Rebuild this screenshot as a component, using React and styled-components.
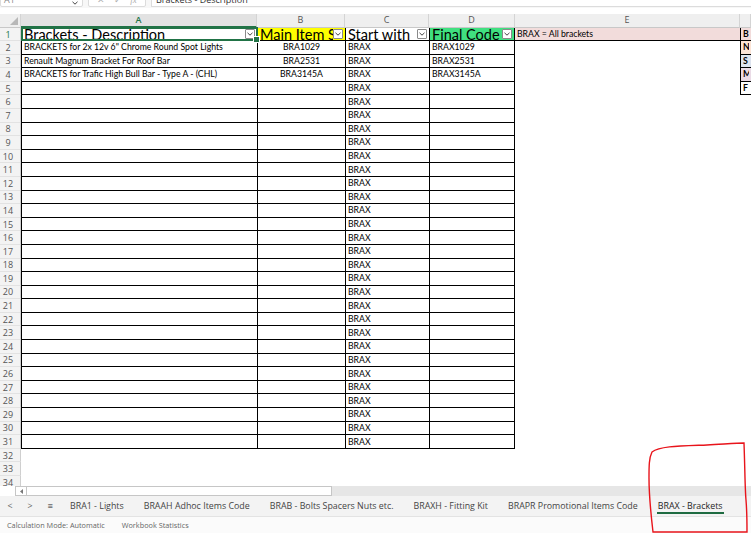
import React from 'react';
import styled, { createGlobalStyle } from 'styled-components';

const Global = createGlobalStyle`
  html, body { margin: 0; padding: 0; background: #fff; }
  body { font-family: "Open Sans", "Noto Sans", sans-serif; }
  * { box-sizing: border-box; }
`;

const Page = styled.div`
  position: relative;
  width: 751px;
  height: 533px;
  overflow: hidden;
  display: flex;
  flex-direction: column;
  background: #fff;
`;

/* ---------- formula bar ---------- */
const FormulaBar = styled.div`
  flex: none;
  height: 20px;
  margin-top: -12px;
  display: flex;
  gap: 5px;
  padding: 0 0 1px 0;
  background: #f7f7f7;
`;

const NameBox = styled.div`
  width: 83px;
  background: #fff;
  border: 1px solid #dcdcdc;
  border-radius: 2px;
  display: flex;
  align-items: flex-end;
  justify-content: space-between;
  padding: 0 4px 1px 3px;
  font-size: 9px;
  line-height: 10px;
  color: #8a8a8a;
`;

const FxBox = styled.div`
  width: 58px;
  background: #fff;
  border: 1px solid #dcdcdc;
  border-radius: 2px;
  display: flex;
  align-items: flex-end;
  justify-content: space-around;
  padding: 0 4px 1px;
  font-size: 9px;
  line-height: 10px;
  color: #b0b0b0;
`;

const FxLabel = styled.span`
  font-style: italic;
  font-family: "Liberation Serif", serif;
`;

const FormulaInput = styled.div`
  flex: 1;
  background: #fff;
  border: 1px solid #dcdcdc;
  border-right: none;
  display: flex;
  align-items: flex-end;
  padding: 0 4px 1px;
  font-size: 9px;
  line-height: 10px;
  color: #333;
`;

const Gap = styled.div`
  flex: none;
  height: 6px;
  background: #fff;
`;

/* ---------- sheet grid ---------- */
const Sheet = styled.div`
  flex: none;
  height: 472px;
  overflow: hidden;
  display: grid;
  grid-template-columns: 21px 236px 88px 84px 86px 225px 11px;
  grid-template-rows: 14px 13px repeat(33, 13.6px);
  font-family: Lato, "Liberation Sans", sans-serif;
`;

const Corner = styled.div`
  position: relative;
  background: #efefef;
  border-right: 1px solid #d4d4d4;
  border-bottom: 1px solid #c8c8c8;
  &::after {
    content: '';
    position: absolute;
    right: 2px;
    bottom: 2px;
    border-style: solid;
    border-width: 0 0 8px 8px;
    border-color: transparent transparent #b8b8b8 transparent;
  }
`;

const ColHead = styled.div`
  background: ${p => (p.$active ? '#e2e2e2' : '#efefef')};
  border-right: 1px solid #d4d4d4;
  border-bottom: ${p => (p.$active ? '2px solid #217346' : '1px solid #c8c8c8')};
  color: ${p => (p.$active ? '#217346' : '#555')};
  font-family: "Open Sans", "Noto Sans", sans-serif;
  font-weight: ${p => (p.$active ? 600 : 400)};
  font-size: 9px;
  line-height: 12px;
  text-align: center;
  overflow: hidden;
`;

const RowHead = styled.div`
  background: #f3f3f3;
  border-right: 1px solid #cfcfcf;
  border-bottom: 1px solid #e2e2e2;
  color: ${p => (p.$active ? '#217346' : '#555')};
  font-family: "Open Sans", "Noto Sans", sans-serif;
  font-size: 9px;
  display: flex;
  align-items: center;
  justify-content: center;
  overflow: hidden;
  padding-right: 4px;
`;

const Cell = styled.div`
  position: relative;
  min-width: 0;
  display: flex;
  align-items: ${p => (p.$big ? 'flex-start' : 'center')};
  justify-content: ${p => (p.$center ? 'center' : 'flex-start')};
  padding: 0 2px;
  background: ${p => p.$bg || '#fff'};
  border-left: ${p => (p.$left ? '1px solid #000' : 'none')};
  border-right: ${p => (p.$right ? '1px solid #000' : 'none')};
  border-bottom: ${p => (p.$bottom ? '1px solid #000' : 'none')};
  font-size: ${p => (p.$big ? '14.5px' : '8.7px')};
  font-weight: ${p => (p.$bold ? 700 : 400)};
  line-height: ${p => (p.$big ? '13px' : '12px')};
  color: #000;
  white-space: nowrap;
  overflow: ${p => (p.$big ? 'hidden' : 'visible')};
  ${p =>
    p.$active &&
    `
    overflow: visible;
    &::after {
      content: '';
      position: absolute;
      left: -1px; right: -1px; top: -1px; bottom: -1px;
      border: 2px solid #217346;
      pointer-events: none;
      z-index: 2;
    }
    &::before {
      content: '';
      position: absolute;
      right: -3px; bottom: -3px;
      width: 5px; height: 5px;
      background: #217346;
      border: 1px solid #fff;
      z-index: 3;
    }
  `}
`;

const Clip = styled.span`
  display: block;
  overflow: hidden;
  flex: 1;
  min-width: 0;
  height: 100%;
`;

const FilterBtn = styled.span`
  flex: none;
  width: 10px;
  height: 10px;
  margin-top: 1px;
  border: 1px solid #8a8a8a;
  background: #fff;
  display: flex;
  align-items: center;
  justify-content: center;
  border-radius: 1px;
`;

/* ---------- scrollbar / tabs / status ---------- */
const ScrollRow = styled.div`
  flex: none;
  height: 10px;
  display: flex;
  background: #fff;
`;

const ScrollTrack = styled.div`
  flex: 1;
  margin-left: 15px;
  background: #e6e6e6;
  display: flex;
  align-items: stretch;
`;

const ScrollBtn = styled.div`
  width: 12px;
  background: #fff;
  border: 1px solid #c6c6c6;
  display: flex;
  align-items: center;
  justify-content: center;
`;

const ScrollThumb = styled.div`
  width: 305px;
  background: #fff;
  border: 1px solid #c6c6c6;
  border-left: none;
`;

const TabBar = styled.div`
  flex: none;
  height: 21px;
  display: flex;
  align-items: stretch;
  background: #f3f3f3;
  border-bottom: 1px solid #e3e3e3;
  font-size: 8.85px;
  color: #444;
`;

const NavBtn = styled.div`
  width: ${p => p.$w}px;
  display: flex;
  align-items: center;
  justify-content: center;
  color: #666;
`;

const Tab = styled.div`
  position: relative;
  display: flex;
  align-items: center;
  padding: 0 10px;
  color: ${p => (p.$active ? '#1f1f1f' : '#444')};
  white-space: nowrap;
  &::after {
    content: '';
    position: absolute;
    left: 9px;
    right: 9px;
    bottom: 2px;
    height: 2px;
    background: ${p => (p.$active ? '#1e6b41' : 'transparent')};
  }
`;

const StatusBar = styled.div`
  flex: none;
  height: 16px;
  display: flex;
  align-items: center;
  gap: 17px;
  padding-left: 7px;
  background: #fbfbfb;
  font-size: 7.3px;
  color: #666;
`;

const Annotation = styled.svg`
  position: absolute;
  left: 0;
  top: 0;
  pointer-events: none;
`;

/* ---------- data ---------- */
const rowsB = { 2: 'BRA1029', 3: 'BRA2531', 4: 'BRA3145A' };
const rowsD = { 2: 'BRAX1029', 3: 'BRAX2531', 4: 'BRAX3145A' };
const rowsA = {
  2: 'BRACKETS for 2x 12v 6" Chrome Round Spot Lights',
  3: 'Renault Magnum Bracket For Roof Bar',
  4: 'BRACKETS for Trafic High Bull Bar - Type A - (CHL)',
};
const fCol = [
  { t: 'B', bg: '#f2dcdb' },
  { t: 'N', bg: '#fce4d6' },
  { t: 'S', bg: '#dde3ee' },
  { t: 'M', bg: '#eadbe6' },
  { t: 'F', bg: '#ffffff' },
];

const Chevron = () => (
  <svg width="6" height="4" viewBox="0 0 6 4">
    <path d="M0.5 0.8 L3 3.2 L5.5 0.8" fill="none" stroke="#444" strokeWidth="1" />
  </svg>
);

const HeaderCell = ({ text, bg, active, right }) => (
  <Cell $big $bg={bg} $left $right={right} $bottom $active={active}>
    <Clip>{text}</Clip>
    <FilterBtn>
      <Chevron />
    </FilterBtn>
  </Cell>
);

export default function App() {
  const rows = [];
  for (let r = 2; r <= 34; r++) {
    const inTable = r <= 31;
    rows.push(
      <React.Fragment key={r}>
        <RowHead>{r}</RowHead>
        <Cell $left={inTable} $bottom={inTable}>{rowsA[r] || ''}</Cell>
        <Cell $left={inTable} $bottom={inTable} $center>{rowsB[r] || ''}</Cell>
        <Cell $left={inTable} $bottom={inTable}>{inTable ? 'BRAX' : ''}</Cell>
        <Cell $left={inTable} $right={inTable} $bottom={inTable}>{rowsD[r] || ''}</Cell>
        <Cell />
        {r <= 5 ? (
          <Cell $left $bottom $bold $bg={fCol[r - 1].bg}>
            <Clip>{fCol[r - 1].t}</Clip>
          </Cell>
        ) : (
          <Cell />
        )}
      </React.Fragment>
    );
  }

  return (
    <Page>
      <Global />
      <FormulaBar>
        <NameBox>
          <span>A1</span>
          <Chevron />
        </NameBox>
        <FxBox>
          <span>✕</span>
          <span>✓</span>
          <FxLabel>fx</FxLabel>
        </FxBox>
        <FormulaInput>Brackets - Description</FormulaInput>
      </FormulaBar>
      <Gap />
      <Sheet>
        <Corner />
        <ColHead $active>A</ColHead>
        <ColHead>B</ColHead>
        <ColHead>C</ColHead>
        <ColHead>D</ColHead>
        <ColHead>E</ColHead>
        <ColHead />

        <RowHead $active>1</RowHead>
        <HeaderCell text="Brackets - Description" active />
        <HeaderCell text="Main Item Search" bg="#ffff00" />
        <HeaderCell text="Start with" />
        <HeaderCell text="Final Code" bg="#40e080" right />
        <Cell $bg="#f2dcdb" $bottom>BRAX = All brackets</Cell>
        <Cell $left $bottom $bold $bg={fCol[0].bg}>
          <Clip>{fCol[0].t}</Clip>
        </Cell>
        {rows}
      </Sheet>
      <ScrollRow>
        <ScrollTrack>
          <ScrollBtn>
            <svg width="3" height="5" viewBox="0 0 3 5">
              <path d="M3 0 L0 2.5 L3 5 Z" fill="#777" />
            </svg>
          </ScrollBtn>
          <ScrollThumb />
        </ScrollTrack>
      </ScrollRow>
      <TabBar>
        <NavBtn $w={20}>&lt;</NavBtn>
        <NavBtn $w={20}>&gt;</NavBtn>
        <NavBtn $w={20}>≡</NavBtn>
        <Tab>BRA1 - Lights</Tab>
        <Tab>BRAAH Adhoc Items Code</Tab>
        <Tab>BRAB - Bolts Spacers Nuts etc.</Tab>
        <Tab>BRAXH - Fitting Kit</Tab>
        <Tab>BRAPR Promotional Items Code</Tab>
        <Tab $active>BRAX - Brackets</Tab>
      </TabBar>
      <StatusBar>
        <span>Calculation Mode: Automatic</span>
        <span>Workbook Statistics</span>
      </StatusBar>
      <Annotation width="751" height="533" viewBox="0 0 751 533">
        <path
          d="M652 452 C 660 446, 680 446, 707 445 C 725 444, 738 443, 744 443 C 745 470, 745 490, 746 500 C 747 512, 747 522, 747 532 L 653 532 C 651 515, 649 495, 649 478 C 649 466, 649 458, 652 452 Z"
          fill="none"
          stroke="#e8141b"
          strokeWidth="1.4"
        />
      </Annotation>
    </Page>
  );
}
